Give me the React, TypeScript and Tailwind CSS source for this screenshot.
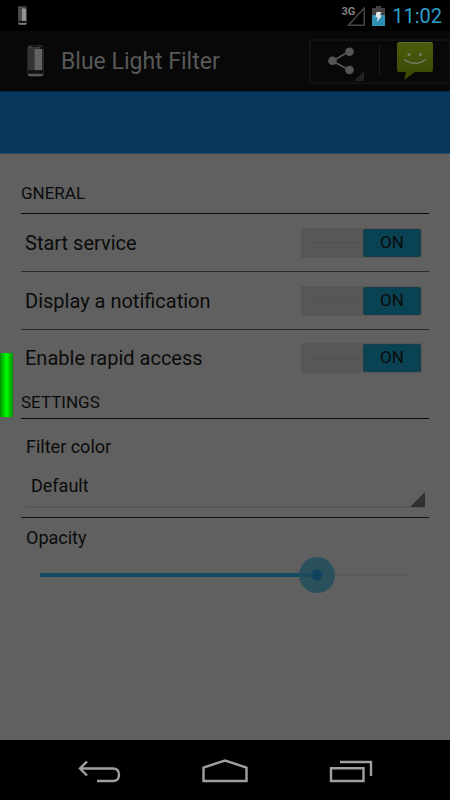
import { useState } from "react";

interface ToggleRowProps {
  id: string;
  label: string;
  last?: boolean;
}

function PhoneIcon({ className }: { className: string }) {
  return (
    <svg viewBox="0 0 18 32" preserveAspectRatio="none" className={className} aria-hidden="true">
      <rect x="0.5" y="0.5" width="17" height="31" rx="2.5" fill="#3c3f3f" />
      <rect x="1" y="3.5" width="16" height="24" fill="#262626" />
      <path d="M5 1h8v1H5z" fill="#0c0c0c" />
      <path d="M1 4h7v21H1z" fill="#333333" />
      <path d="M8 4h8v21H8z" fill="#626262" />
      <path d="M14 1.5h3V4h-3z" fill="#0a0a0a" />
      <path d="M1 25.5h16v3H1z" fill="#090909" />
      <path d="M3 26.5h1v1H3zM8 26.5h2v1H8zM13 26.5h1v1h-1z" fill="#4a4a4a" />
      <path d="M1 29h16l-1 2H2z" fill="#585a5a" />
    </svg>
  );
}

function StatusBar() {
  return (
    <div className="flex h-[31px] items-center justify-between bg-black pl-[18px] pr-2">
      <PhoneIcon className="h-[19px] w-[9px] brightness-150" />
      <div className="flex items-center gap-[7px]">
        <div className="flex items-start">
          <span className="text-[11px] font-bold leading-3 text-[#808080]">3G</span>
          <svg viewBox="0 0 18 20" className="-ml-2 h-5 w-[18px]" aria-hidden="true">
            <path d="M1.5 19.2h15.700V2z" fill="none" stroke="#484848" strokeWidth="1.4" />
          </svg>
        </div>
        <svg viewBox="0 0 13 20" className="h-5 w-[13px]" aria-hidden="true">
          <path d="M4 0h5v2h4v7H0V2h4z" fill="#414141" />
          <path d="M0 9h13v11H0z" fill="#2e8fb4" />
          <path d="M4.5 6h4.8L8 9.5h2L5 16l.7-4.8H3.4z" fill="#e4e8ea" />
        </svg>
        <span className="text-[20px] leading-6 text-[#2c9fc9]">11:02</span>
      </div>
    </div>
  );
}

function ActionBar() {
  return (
    <header className="flex h-[60px] items-center justify-between bg-[#080808] pl-[27px]">
      <div className="flex items-center gap-[17px]">
        <PhoneIcon className="h-8 w-[17px]" />
        <h1 className="pt-0.5 text-[23px] leading-7 text-[#595959]">Blue Light Filter</h1>
      </div>
      <div className="flex h-[45px] w-[141px] items-center border-2 border-r border-[#111111]">
        <button type="button" aria-label="Share" className="flex h-full w-[68px] items-center">
          <svg viewBox="0 0 68 41" className="h-[41px] w-[68px]" aria-hidden="true">
            <path d="M38 10.5L21.5 20L38 29" fill="none" stroke="#565656" strokeWidth="1.8" />
            <circle cx="38.5" cy="10.7" r="4.3" fill="#565656" />
            <circle cx="21.5" cy="19.8" r="4.3" fill="#565656" />
            <circle cx="38.5" cy="29" r="4.3" fill="#565656" />
            <path d="M43 40h10V30z" fill="#222222" />
          </svg>
        </button>
        <span className="h-[30px] w-px bg-[#1c1c1c]" />
        <button type="button" aria-label="Share with Messaging" className="flex h-full flex-1 items-center justify-center">
          <svg viewBox="0 0 38 40" className="h-10 w-[38px]" aria-hidden="true">
            <defs>
              <linearGradient id="bubble" x1="0" y1="0" x2="0" y2="1">
                <stop offset="0" stopColor="#4c5d0c" />
                <stop offset="1" stopColor="#394806" />
              </linearGradient>
            </defs>
            <path d="M3 1h32q2 0 2 2v26q0 2-2 2H19L8 39l2-8H3q-2 0-2-2V3q0-2 2-2z" fill="url(#bubble)" />
            <path d="M3 1.5h32" stroke="#60722a" />
            <circle cx="13" cy="13.5" r="1.6" fill="#747967" />
            <circle cx="24.5" cy="13.5" r="1.6" fill="#747967" />
            <path d="M8 18.500q11 7.500 22 0" fill="none" stroke="#747967" strokeWidth="1.5" />
          </svg>
        </button>
      </div>
    </header>
  );
}

function ToggleRow({ id, label, last = false }: ToggleRowProps) {
  const [on, setOn] = useState(true);

  return (
    <div
      className={
        last
          ? "flex h-14 items-center justify-between pl-1 pr-[7px]"
          : "flex h-[58px] items-center justify-between border-b border-[#2a2a2a] pl-1 pr-[7px]"
      }
    >
      <label htmlFor={id} className="text-[20px] leading-6">
        {label}
      </label>
      <span className="relative flex h-[30px] w-[121px] items-center bg-[#575757] p-px">
        <input
          id={id}
          type="checkbox"
          role="switch"
          checked={on}
          onChange={(e) => setOn(e.target.checked)}
          className="absolute inset-0 z-10 h-full w-full cursor-pointer opacity-0"
        />
        {on && <span className="ml-2 mr-px h-px flex-1 bg-[#515151]" />}
        <span
          className={
            on
              ? "flex h-7 w-[58px] items-center justify-center rounded-xs border border-[#173f4b] bg-[#094253] text-[17px] text-[#0b0b0b]"
              : "flex h-7 w-[58px] items-center justify-center rounded-xs border border-[#3c3c3c] bg-[#444444] text-[17px] text-[#0b0b0b]"
          }
        >
          {on ? "ON" : "OFF"}
        </span>
        {!on && <span className="ml-px mr-2 h-px flex-1 bg-[#515151]" />}
      </span>
    </div>
  );
}

function OpacitySlider() {
  const [value, setValue] = useState(191);

  return (
    <div className="relative mx-px h-9">
      <div className="absolute inset-x-[18px] top-[17px] h-[2px] bg-[#595959]" />
      <div className="absolute inset-x-[18px] top-4 h-1">
        <div className="h-full bg-[#124a64]" style={{ width: `${(value / 255) * 100}%` }} />
      </div>
      <input
        id="opacity"
        type="range"
        min={0}
        max={255}
        value={value}
        onChange={(e) => setValue(Number(e.target.value))}
        className="absolute inset-0 m-0 h-9 w-full appearance-none bg-transparent [&::-webkit-slider-thumb]:size-9 [&::-webkit-slider-thumb]:appearance-none [&::-webkit-slider-thumb]:rounded-full [&::-webkit-slider-thumb]:bg-[radial-gradient(circle,#10445e_5px,#1d4d5acc_6px)]"
      />
    </div>
  );
}

function NavBar() {
  return (
    <nav aria-label="System" className="flex h-[60px] items-center justify-center gap-20 bg-black pt-1">
      <button type="button" aria-label="Back" className="w-[46px]">
        <svg viewBox="0 0 46 26" className="h-[26px] w-[46px]" fill="none" stroke="#a0a0a0" strokeWidth="2.4" aria-hidden="true">
          <path d="M4 9.5H37q6 0 6 6.3T37 22H21" />
          <path d="M11 2.500L4 9.500l7 7" />
        </svg>
      </button>
      <button type="button" aria-label="Home" className="w-[46px]">
        <svg viewBox="0 0 46 26" className="h-[26px] w-[46px]" fill="none" stroke="#a0a0a0" strokeWidth="2.4" aria-hidden="true">
          <path d="M1.500 22V8.500L23 1.500L44.500 8.500V22z" />
        </svg>
      </button>
      <button type="button" aria-label="Recent apps" className="w-[46px]">
        <svg viewBox="0 0 46 26" className="h-[26px] w-[46px]" fill="none" stroke="#a0a0a0" strokeWidth="2.4" aria-hidden="true">
          <path d="M3 9.3h32.5V22H3z" />
          <path d="M12 3h31v14" />
        </svg>
      </button>
    </nav>
  );
}

export default function App() {
  return (
    <div className="relative flex min-h-screen flex-col bg-[#606060] font-['Roboto','Liberation_Sans',sans-serif] text-[#0b0b0b]">
      <StatusBar />
      <ActionBar />
      <div className="h-[63px] border-y border-t-[#0a2c47] border-b-[#2f4a61] bg-[#08375e]" />

      <main className="flex-1 px-[21px]">
        <h2 className="border-b border-[#0a0a0a] pb-2 pt-[27px] text-[17px] leading-6">GNERAL</h2>
        <ToggleRow id="start-service" label="Start service" />
        <ToggleRow id="notification" label="Display a notification" />
        <ToggleRow id="rapid-access" label="Enable rapid access" last />

        <h2 className="border-b border-[#0a0a0a] pb-1 pt-1 text-[17px] leading-6">SETTINGS</h2>
        <div className="border-b border-[#151515] px-1 pb-[9px] pt-4">
          <label htmlFor="filter-color" className="block pl-px text-[18px] leading-6">
            Filter color
          </label>
          <div className="relative mt-[5px] border-b-2 border-[#565656]">
            <select
              id="filter-color"
              defaultValue="default"
              className="block h-[42px] w-full appearance-none bg-transparent px-1.5 text-[18px] outline-none"
            >
              <option value="default">Default</option>
            </select>
            <svg viewBox="0 0 15 15" className="pointer-events-none absolute -bottom-px right-0 size-[15px]" aria-hidden="true">
              <path d="M0 15H15V0z" fill="#303030" />
            </svg>
          </div>
        </div>
        <label htmlFor="opacity" className="block pb-[7px] pl-[5px] pt-2 text-[18px] leading-6">
          Opacity
        </label>
        <OpacitySlider />
      </main>

      <NavBar />

      {/* Rapid access handle, floats on the left screen edge */}
      <button
        type="button"
        aria-label="Rapid access"
        className="absolute left-0 top-[353px] h-16 w-[13px] bg-linear-to-r from-[#009000] via-[#00ff00] to-[#009000]"
      />
    </div>
  );
}
